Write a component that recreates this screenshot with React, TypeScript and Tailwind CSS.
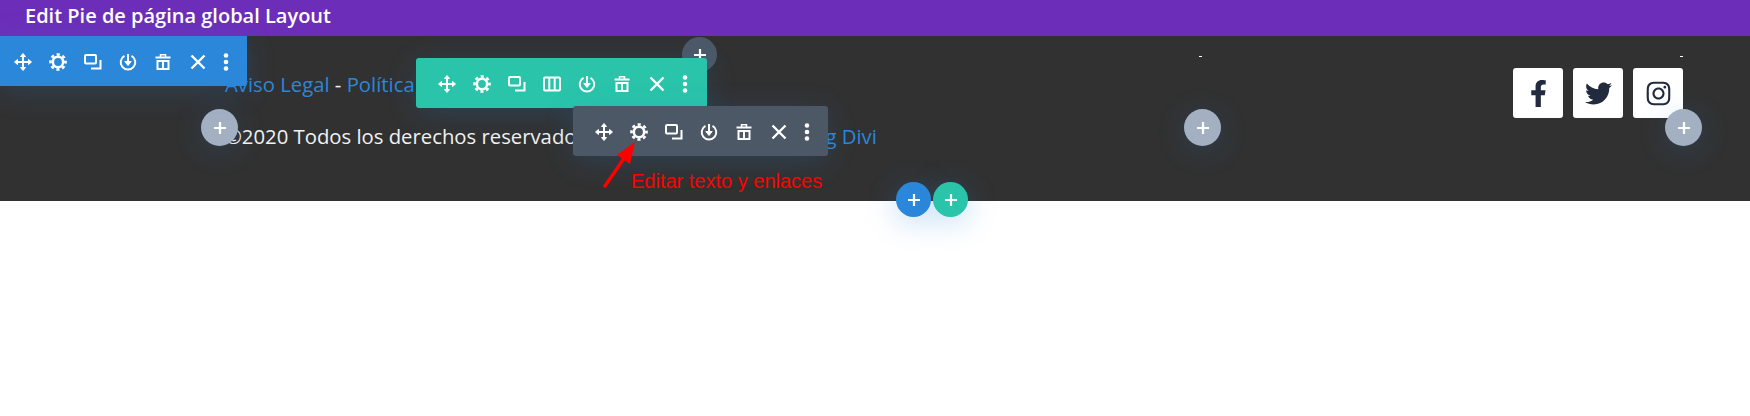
import { FaFacebookF, FaInstagram, FaTwitter } from 'react-icons/fa';

type IconName = 'move' | 'gear' | 'copy' | 'columns' | 'save' | 'trash' | 'close' | 'dots';

function ToolIcon({ name }: { name: IconName }) {
  const common = {
    width: 20,
    height: 20,
    viewBox: '0 0 20 20',
    fill: 'none',
    stroke: 'white',
    strokeWidth: 2,
  };
  switch (name) {
    case 'move':
      return (
        <svg {...common}>
          <path d="M10 3v14M3 10h14" />
          <path d="M7.500 4.500 10 1.500l2.500 3zM7.500 15.500 10 18.500l2.500-3zM4.500 7.500 1.500 10l3 2.500zM15.500 7.500l3 2.500-3 2.500z" fill="white" strokeWidth={1} />
        </svg>
      );
    case 'gear':
      return (
        <svg {...common}>
          <circle cx="10" cy="10" r="5.200" strokeWidth={2.600} />
          <circle cx="10" cy="10" r="7.500" strokeWidth={2.600} strokeDasharray="3.100 2.790" strokeDashoffset={1.550} />
        </svg>
      );
    case 'copy':
      return (
        <svg {...common}>
          <rect x="2" y="3" width="11" height="8.500" rx="1" />
          <path d="M17.500 8v8.500H8" />
        </svg>
      );
    case 'columns':
      return (
        <svg {...common}>
          <rect x="2" y="3.500" width="16" height="13" rx="1" />
          <path d="M7.300 3.500v13M12.700 3.500v13" />
        </svg>
      );
    case 'save':
      return (
        <svg {...common}>
          <path d="M6.500 3.800a7.300 7.300 0 1 0 7 0" />
          <path d="M10 2v9" />
          <path d="M6.800 9.500 10 13.500l3.200-4z" fill="white" strokeWidth={1} />
        </svg>
      );
    case 'trash':
      return (
        <svg {...common}>
          <path d="M2.500 5.500h15" />
          <path d="M7.500 5V2.800h5V5" strokeWidth={1.500} />
          <path d="M4.500 9h11v8h-11zM10 10v7" strokeWidth={2} />
        </svg>
      );
    case 'close':
      return (
        <svg {...common} strokeWidth={2.400}>
          <path d="M3.500 3.500l13 13M16.500 3.500l-13 13" />
        </svg>
      );
    case 'dots':
      return (
        <svg {...common} stroke="none" fill="white">
          <circle cx="10" cy="3.500" r="2.300" />
          <circle cx="10" cy="10" r="2.300" />
          <circle cx="10" cy="16.500" r="2.300" />
        </svg>
      );
  }
}

function Toolbar({ icons, className }: { icons: IconName[]; className: string }) {
  return (
    <div className={`absolute flex h-[50px] items-center ${className}`}>
      {icons.map((name, i) => (
        <span
          key={i}
          className={`flex h-5 items-center justify-center ${name === 'dots' ? 'w-[21px]' : 'w-[35px]'}`}
        >
          <ToolIcon name={name} />
        </span>
      ))}
    </div>
  );
}

function AddButton({ className }: { className: string }) {
  return (
    <button className={`absolute flex items-center justify-center rounded-full ${className}`}>
      <svg width="14" height="14" viewBox="0 0 14 14" stroke="white" strokeWidth="2.200">
        <path d="M7 1v12M1 7h12" />
      </svg>
    </button>
  );
}

function SocialLink({ children }: { children: React.ReactNode }) {
  return (
    <a className="flex h-[50px] w-[50px] items-center justify-center rounded-[3px] bg-white text-[27px] text-[#222b3d]">
      {children}
    </a>
  );
}

export default function App() {
  return (
    <div className="min-h-[416px] bg-white font-['Open_Sans',sans-serif]">
      <header className="flex h-9 items-center bg-[#6c2eb9] pl-[25px] pb-[5px] text-[20px] font-semibold text-white">
        Edit Pie de página global Layout
      </header>

      <footer className="relative h-[165px] bg-[#313131] pt-[18px]">
        <div className="flex">
          <div className="ml-[225px] w-[775px] pt-[15px] text-[20.3px] leading-[30px] text-[#f2f2f2]">
            <p className="whitespace-nowrap">
              <a className="text-[#2b87da]">Aviso Legal</a> - <a className="text-[#2b87da]">Política de privacidad</a>
            </p>
            <p className="mt-[22px] whitespace-nowrap">
              ©2020 Todos los derechos reservados | Desarrollado por el <a className="text-[#2b87da]">Blog Divi</a>
            </p>
          </div>
          <div className="flex w-[202px] justify-end pt-[2px]">
            <span className="h-px w-[3px] bg-white" />
          </div>
          <div className="flex w-[481px] flex-col items-end">
            <span className="mt-[2px] h-px w-[3px] bg-white" />
            <div className="mt-[11px] flex gap-2.5">
              <SocialLink><FaFacebookF /></SocialLink>
              <SocialLink><FaTwitter /></SocialLink>
              <SocialLink><FaInstagram /></SocialLink>
            </div>
          </div>
        </div>

        <AddButton className="top-[1px] left-[682px] h-[35px] w-[35px] bg-[#4c5866]" />
        <AddButton className="top-[73px] left-[201px] h-[37px] w-[37px] bg-[#a3b0c2] shadow-[0_5px_30px_rgba(43,135,218,0.2)]" />
        <AddButton className="top-[73px] left-[1184px] h-[37px] w-[37px] bg-[#a3b0c2] shadow-[0_5px_30px_rgba(43,135,218,0.2)]" />
        <AddButton className="top-[73px] left-[1665px] h-[37px] w-[37px] bg-[#a3b0c2] shadow-[0_5px_30px_rgba(43,135,218,0.2)]" />
        <AddButton className="top-[146px] left-[896px] z-10 h-[35px] w-[35px] bg-[#2b87da] shadow-[0_5px_30px_rgba(43,135,218,0.3)]" />
        <AddButton className="top-[146px] left-[933px] z-10 h-[35px] w-[35px] bg-[#29c4a9] shadow-[0_5px_30px_rgba(43,135,218,0.3)]" />

        <Toolbar
          icons={['move', 'gear', 'copy', 'save', 'trash', 'close', 'dots']}
          className="top-0 left-0 w-[247px] rounded-br-[3px] bg-[#2b87da] pt-px pl-[5px] shadow-[0_5px_30px_rgba(43,135,218,0.2)]"
        />
        <Toolbar
          icons={['move', 'gear', 'copy', 'columns', 'save', 'trash', 'close', 'dots']}
          className="top-[22px] left-[416px] w-[291px] rounded-[3px] bg-[#29c4a9] pt-[2px] pl-[13px] shadow-[0_5px_30px_rgba(43,135,218,0.2)]"
        />
        <Toolbar
          icons={['move', 'gear', 'copy', 'save', 'trash', 'close', 'dots']}
          className="top-[70px] left-[573px] w-[255px] rounded-[3px] bg-[#4c5866] pt-[2px] pl-[13px] shadow-[0_5px_30px_rgba(43,135,218,0.2)]"
        />

        <svg className="absolute top-[104px] left-[600px]" width="40" height="50" viewBox="0 0 40 50" fill="none">
          <path d="M5 46 25 17" stroke="#ff0000" strokeWidth="3.500" strokeLinecap="round" />
          <path d="M35 2 17 15l13 9z" fill="#ff0000" />
        </svg>
        <span className="absolute top-[133px] left-[631px] font-['Liberation_Sans',sans-serif] text-[20px] leading-6 whitespace-nowrap text-[#ff0000]">
          Editar texto y enlaces
        </span>
      </footer>
    </div>
  );
}
